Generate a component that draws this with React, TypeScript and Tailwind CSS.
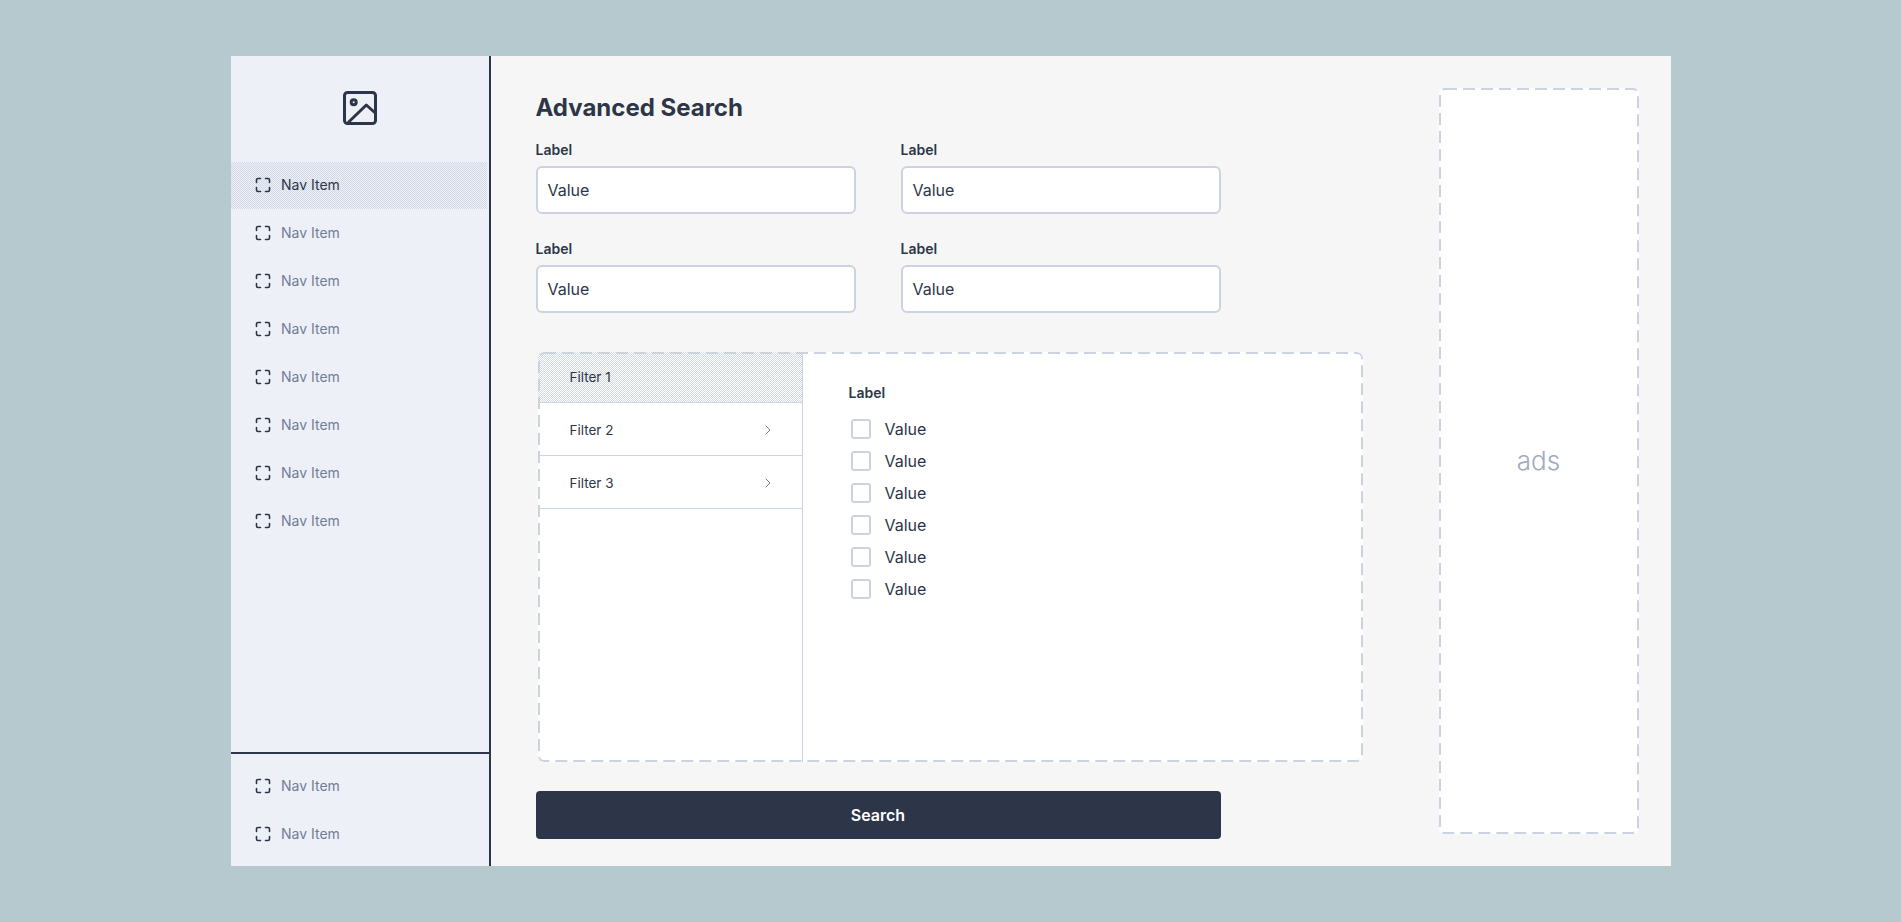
import React from 'react';
import { ChevronRight } from 'lucide-react';

const DITHER = 'bg-[conic-gradient(#d2d8e4_25%,transparent_0_50%,#d2d8e4_0_75%,transparent_0)] bg-[length:2px_2px]';

function FrameIcon() {
  return (
    <svg width="16" height="16" viewBox="0 0 16 16" fill="none" stroke="currentColor" strokeWidth="1.6" strokeLinecap="round" strokeLinejoin="round" className="shrink-0 text-[#2d3648]">
      <path d="M1.5 5.5V3A1.5 1.5 0 0 1 3 1.5h2.5" />
      <path d="M10.5 1.5H13A1.5 1.5 0 0 1 14.5 3v2.5" />
      <path d="M14.5 10.5V13a1.5 1.5 0 0 1-1.5 1.5h-2.5" />
      <path d="M5.5 14.5H3A1.5 1.5 0 0 1 1.5 13v-2.5" />
    </svg>
  );
}

function NavItem({ active = false }: { active?: boolean }) {
  return (
    <div className={`mr-[2px] flex h-12 items-center gap-[10.5px] border-b border-transparent bg-clip-padding pb-px pl-6 text-sm ${active ? `${DITHER} text-[#2d3648]` : 'text-[#717d96]'}`}>
      <FrameIcon />
      <span>Nav Item</span>
    </div>
  );
}

function Field() {
  return (
    <div className="flex w-[320px] flex-col gap-[7px]">
      <label className="text-[14px] leading-[18px] font-semibold text-[#2d3648]">Label</label>
      <div className="flex h-12 items-center rounded-md border-2 border-[#cbd2e0] bg-white px-[10px] text-base text-[#2d3648]">Value</div>
    </div>
  );
}

function FilterRow({ label, active = false }: { label: string; active?: boolean }) {
  return (
    <div className={`flex items-center justify-between border-b border-[#cbd2e0] pr-[26px] pl-[32px] text-[13.5px] text-[#2d3648] ${active ? `h-[51px] pt-px ${DITHER}` : 'h-[53px] bg-white pt-[2px]'}`}>
      <span>{label}</span>
      <ChevronRight size={16} strokeWidth={1.5} className={active ? 'text-[#eef0f5]' : 'text-[#717d96]'} />
    </div>
  );
}

function CheckRow() {
  return (
    <div className="flex h-8 items-center gap-[14px] pl-[2px]">
      <span className="h-5 w-5 rounded-[3px] border-2 border-[#cbd2e0] bg-white" />
      <span className="text-base text-[#2d3648]">Value</span>
    </div>
  );
}

// chrome's own dashed border is too short, the picture has 12/6 dashes
function DashedOutline() {
  return (
    <svg className="pointer-events-none absolute inset-0 h-full w-full" fill="none">
      <rect x="1" y="1" rx="5" stroke="#cbd2e0" strokeWidth="2" strokeDasharray="12 6" className="h-[calc(100%-2px)] w-[calc(100%-2px)]" />
    </svg>
  );
}

export default function App() {
  return (
    <div className="flex min-h-[922px] items-start justify-center bg-[#b6c9ce] pt-14 font-['Inter',sans-serif]">
      <div className="flex h-[810px] w-[1440px] bg-[#f6f6f6]">
        <aside className="flex w-[260px] shrink-0 flex-col border-r-2 border-[#2d3648] bg-[#edf0f7]">
          <div className="flex h-[106px] shrink-0 items-center justify-center pb-[2px]">
            <svg width="34" height="34" viewBox="0 0 34 34" fill="none" stroke="#2d3648" strokeWidth="3" strokeLinejoin="round" strokeLinecap="round">
              <rect x="1.5" y="1.5" width="31" height="31" rx="3" />
              <circle cx="10.7" cy="11.3" r="2.5" />
              <path d="M5.7 31 23.3 14l8.4 7.5" />
            </svg>
          </div>
          <nav className="flex-1">
            <NavItem active />
            <NavItem />
            <NavItem />
            <NavItem />
            <NavItem />
            <NavItem />
            <NavItem />
            <NavItem />
          </nav>
          <div className="h-[114px] shrink-0 border-t-2 border-[#2d3648] pt-[9px]">
            <NavItem />
            <NavItem />
          </div>
        </aside>

        <main className="flex min-w-0 flex-1 justify-between pt-8 pr-8 pl-[45px]">
          <div className="flex w-[827px] flex-col">
            <h1 className="text-2xl leading-[40px] font-bold text-[#2d3648]">Advanced Search</h1>
            <div className="mt-[13px] grid w-[685px] grid-cols-[320px_320px] justify-between gap-y-[26px]">
              <Field />
              <Field />
              <Field />
              <Field />
            </div>
            <div className="relative mt-[39px] ml-[2px] flex h-[410px] overflow-hidden rounded-md bg-white">
              <div className="w-[265px] shrink-0 border-r border-[#cbd2e0]">
                <FilterRow label="Filter 1" active />
                <FilterRow label="Filter 2" />
                <FilterRow label="Filter 3" />
              </div>
              <div className="pt-[32px] pl-[46px]">
                <div className="text-[14px] leading-[18px] font-semibold text-[#2d3648]">Label</div>
                <div className="mt-[11px]">
                  <CheckRow />
                  <CheckRow />
                  <CheckRow />
                  <CheckRow />
                  <CheckRow />
                  <CheckRow />
                </div>
              </div>
              <DashedOutline />
            </div>
            <button className="mt-[29px] h-12 w-[685px] rounded-[4px] bg-[#2d3648] text-base font-semibold text-white">Search</button>
          </div>
          <div className="relative flex h-[746px] w-[200px] items-center justify-center rounded-md bg-white pb-[2px] text-[26px] font-light text-[#a0abc0]">
            ads
            <DashedOutline />
          </div>
        </main>
      </div>
    </div>
  );
}
